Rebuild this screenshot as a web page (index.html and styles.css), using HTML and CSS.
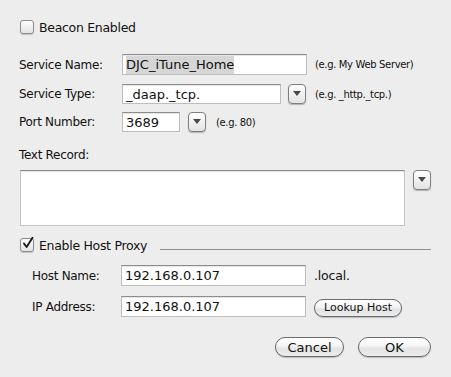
FILE: index.html
```html
<!DOCTYPE html>
<html>
<head>
<meta charset="utf-8">
<link rel="stylesheet" href="styles.css">
</head>
<body>
<div class="dialog">
  <div class="check-row beacon">
    <span class="checkbox"></span>
    <span class="check-label">Beacon Enabled</span>
  </div>

  <div class="row row-name">
    <span class="label">Service Name:</span>
    <span class="field w-name"><span class="sel">DJC_iTune_Home</span></span>
    <span class="hint hint-name">(e.g. My Web Server)</span>
  </div>

  <div class="row row-type">
    <span class="label">Service Type:</span>
    <span class="field w-type">_daap._tcp.</span>
    <span class="popbtn"><span class="tri"></span></span>
    <span class="hint">(e.g. _http._tcp.)</span>
  </div>

  <div class="row row-port">
    <span class="label">Port Number:</span>
    <span class="field w-port">3689</span>
    <span class="popbtn"><span class="tri"></span></span>
    <span class="hint">(e.g. 80)</span>
  </div>

  <div class="txt-label">Text Record:</div>
  <div class="txt-row">
    <div class="textarea"></div>
    <span class="popbtn"><span class="tri"></span></span>
  </div>

  <div class="check-row proxy">
    <span class="checkbox checked"><svg width="13" height="13" viewBox="0 0 13 13"><path d="M3 6.5 L5.6 10 L11.5 0.8" fill="none" stroke="#1a1a1a" stroke-width="1.9" stroke-linecap="round" stroke-linejoin="round"/></svg></span>
    <span class="check-label">Enable Host Proxy</span>
    <span class="rule"></span>
  </div>

  <div class="row row-host">
    <span class="label sub">Host Name:</span>
    <span class="field w-host">192.168.0.107</span>
    <span class="suffix">.local.</span>
  </div>

  <div class="row row-ip">
    <span class="label sub">IP Address:</span>
    <span class="field w-host">192.168.0.107</span>
    <span class="pill small">Lookup Host</span>
  </div>

  <div class="actions">
    <span class="pill big cancel">Cancel</span>
    <span class="pill big ok">OK</span>
  </div>
</div>
</body>
</html>
```

FILE: styles.css
```css
html, body {
  margin: 0;
  padding: 0;
  background: #ededed;
  width: 451px;
  height: 377px;
  overflow: hidden;
}
.dialog {
  font-family: "DejaVu Sans", "Liberation Sans", sans-serif;
  font-size: 12px;
  color: #111;
  padding: 20px 20px 0 19px;
  box-sizing: border-box;
  width: 451px;
}
.check-row {
  display: flex;
  align-items: center;
  height: 14px;
}
.checkbox {
  width: 12px;
  height: 12px;
  margin-left: 1px;
  border: 1px solid #8c8c8c;
  border-radius: 3px;
  background: linear-gradient(#fdfdfd, #e4e4e4);
  box-shadow: 0 1px 1px rgba(0,0,0,0.18);
  position: relative;
  flex: none;
}
.checkbox svg {
  position: absolute;
  left: 0;
  top: -2px;
}
.check-label {
  margin-left: 5px;
  font-size: 12.5px;
  letter-spacing: -0.3px;
}
.row {
  display: flex;
  align-items: center;
  height: 21px;
}
.label {
  width: 103px;
  flex: none;
  font-size: 12px;
  letter-spacing: -0.3px;
}
.label.sub {
  padding-left: 13px;
  box-sizing: border-box;
  width: 102px;
}
.field {
  height: 21px;
  box-sizing: border-box;
  background: #fff;
  border: 1px solid #bdbdbd;
  border-top-color: #8d8d8d;
  box-shadow: inset 0 1px 0 #e6e6e6;
  font-size: 13px;
  line-height: 19px;
  padding-left: 3px;
  flex: none;
  white-space: nowrap;
  overflow: hidden;
}
.sel {
  background: #d6d6d6;
  padding: 1px 0 2px;
}
.w-name { width: 185px; }
.w-type { width: 159px; }
.w-port { width: 58px; }
.w-host { width: 185px; }
.hint {
  font-size: 10px;
  letter-spacing: -0.35px;
  margin-left: 9px;
  color: #111;
}
.hint-name { margin-left: 8px; }
.popbtn {
  width: 18px;
  height: 20px;
  box-sizing: border-box;
  border: 1px solid #7e7e7e;
  border-radius: 4px;
  background: linear-gradient(#ffffff, #f1f1f1 50%, #e3e3e3);
  box-shadow: 0 1px 1px rgba(0,0,0,0.25);
  margin-left: 7px;
  flex: none;
  display: flex;
  justify-content: center;
  padding-top: 6px;
}
.tri {
  width: 0;
  height: 0;
  border-left: 4px solid transparent;
  border-right: 4px solid transparent;
  border-top: 5px solid #4a4a4a;
}
.row-name { margin-top: 20px; }
.row-type { margin-top: 9px; height: 20px; }
.row-type .field { height: 20px; }
.row-port { margin-top: 8px; height: 20px; }
.row-port .field { height: 20px; }
.row-port .popbtn { margin-left: 8px; }
.row-port .hint { margin-left: 10px; }
.txt-label {
  margin-top: 15px;
  height: 16px;
  line-height: 16px;
  font-size: 12px;
  letter-spacing: -0.3px;
}
.txt-row {
  display: flex;
  align-items: flex-start;
  margin-top: 7px;
}
.textarea {
  margin-left: 1px;
  width: 385px;
  height: 56px;
  box-sizing: border-box;
  background: #fff;
  border: 1px solid #c4c4c4;
  border-top-color: #8a8a8a;
  box-shadow: inset 0 1px 0 #e6e6e6;
}
.txt-row .popbtn { margin-left: 8px; }
.proxy {
  margin-top: 11px;
  height: 16px;
}
.rule {
  flex: 1;
  height: 1px;
  background: #8f8f8f;
  margin-left: 13px;
  margin-top: 9px;
}
.row-host { margin-top: 12px; }
.row-ip { margin-top: 10px; }
.suffix {
  margin-left: 8px;
  font-size: 12.5px;
  letter-spacing: -0.2px;
}
.pill {
  box-sizing: border-box;
  border: 1px solid #6a6a6a;
  border-radius: 10px;
  background: linear-gradient(#ffffff, #f6f6f6 40%, #e4e4e4 60%, #ececec);
  box-shadow: 0 1px 1px rgba(0,0,0,0.22);
  display: flex;
  align-items: center;
  justify-content: center;
  flex: none;
}
.pill.small {
  width: 88px;
  height: 18px;
  font-size: 11px;
  margin-left: 8px;
  margin-top: 2px;
}
.actions {
  display: flex;
  justify-content: flex-end;
  margin-top: 20px;
}
.pill.big {
  height: 20px;
  font-size: 13px;
  border-radius: 11px;
}
.cancel { width: 69px; }
.ok { width: 73px; margin-left: 14px; }
```
